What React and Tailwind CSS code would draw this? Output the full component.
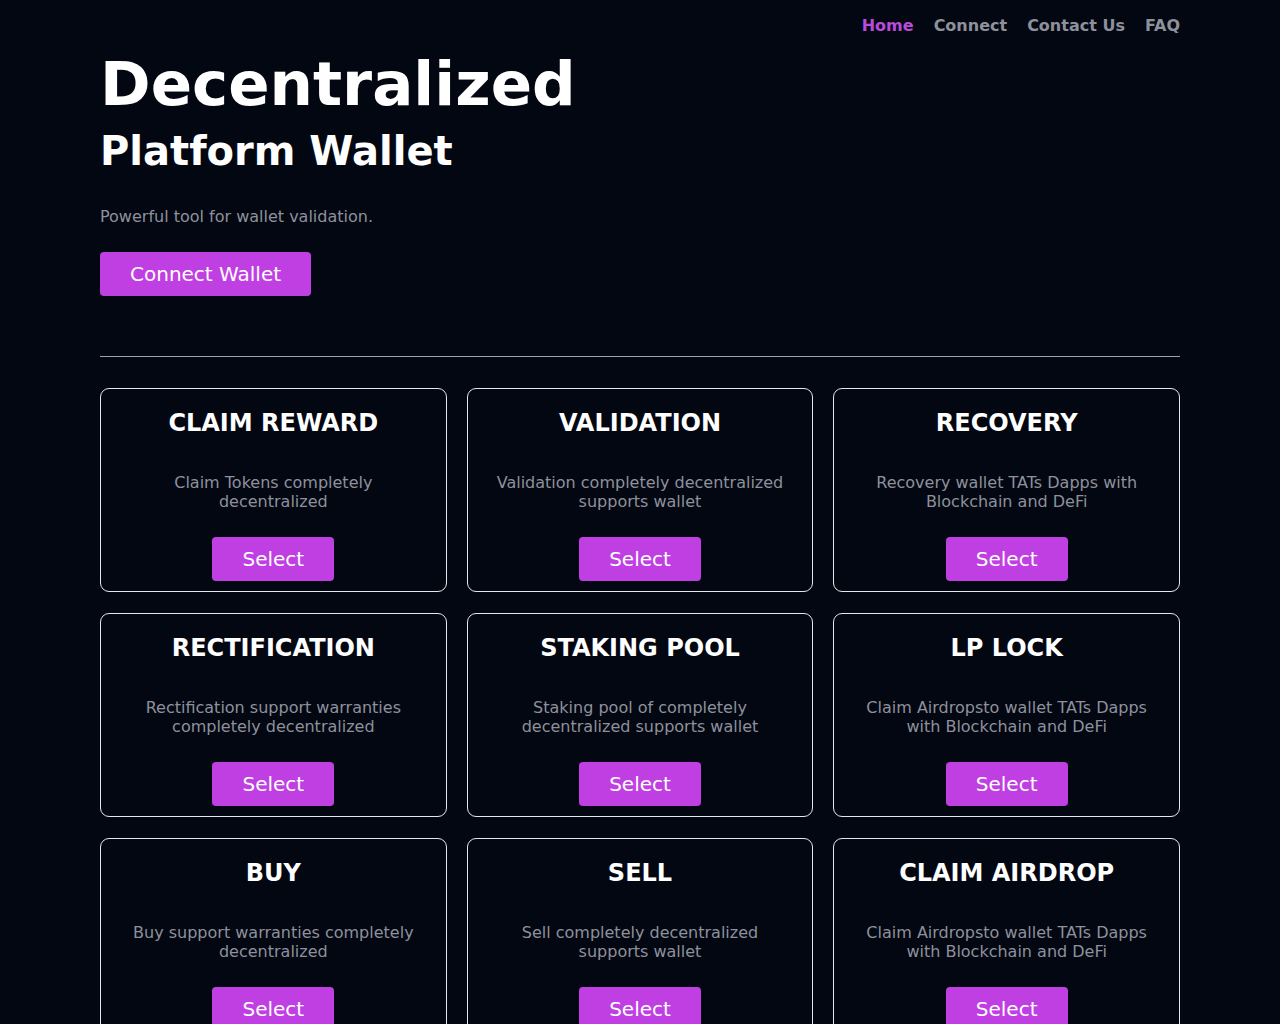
import React from "react";

const cards = [
  ["CLAIM REWARD", "Claim Tokens completely decentralized"],
  ["VALIDATION", "Validation completely decentralized supports wallet"],
  ["RECOVERY", "Recovery wallet TATs Dapps with Blockchain and DeFi"],
  ["RECTIFICATION", "Rectification support warranties completely decentralized"],
  ["STAKING POOL", "Staking pool of completely decentralized supports wallet"],
  ["LP LOCK", "Claim Airdropsto wallet TATs Dapps with Blockchain and DeFi"],
  ["BUY", "Buy support warranties completely decentralized"],
  ["SELL", "Sell completely decentralized supports wallet"],
  ["CLAIM AIRDROP", "Claim Airdropsto wallet TATs Dapps with Blockchain and DeFi"],
];

export default function App() {
  return (
    <div
      className="min-h-screen bg-[#030712] text-white"
      style={{ fontFamily: '"DejaVu Sans", Verdana, sans-serif' }}
    >
      <div className="mx-auto w-[1080px]">
        <nav className="flex justify-end gap-[20px] pt-[15px] text-[16px] font-bold leading-[22px]">
          <a className="text-[#b94bdb]">Home</a>
          <a className="text-[#8e919c]">Connect</a>
          <a className="text-[#8e919c]">Contact Us</a>
          <a className="text-[#8e919c]">FAQ</a>
        </nav>
        <h1 className="mt-[12px] text-[61px] font-bold leading-[70px]">Decentralized</h1>
        <h2 className="mt-[7px] text-[40px] font-bold leading-[50px]">Platform Wallet</h2>
        <p className="mt-[31px] text-[16px] leading-[20px] text-[#8e919c]">
          Powerful tool for wallet validation.
        </p>
        <button className="mt-[25px] h-[44px] rounded-[4px] bg-[#c03fe3] px-[30px] text-[20px] text-white">
          Connect Wallet
        </button>
        <hr className="mt-[60px] border-0 border-t border-[#9ca3af]" />
        <div className="mt-[31px] grid grid-cols-3 gap-x-5 gap-y-[21px]">
          {cards.map(([t, d]) => (
            <div
              key={t}
              className="flex h-[204px] flex-col items-center rounded-[9px] border border-[#e5e7eb] px-5 pt-[20px] text-center"
            >
              <h3 className="text-[24px] font-bold leading-[28px]">{t}</h3>
              <p className="mt-[36px] w-[290px] text-[16px] leading-[19px] text-[#8e919c]">{d}</p>
              <button className="mt-auto mb-[10px] h-[44px] rounded-[4px] bg-[#c03fe3] px-[30px] text-[20px] text-white">
                Select
              </button>
            </div>
          ))}
        </div>
        <div className="h-10" />
      </div>
    </div>
  );
}
